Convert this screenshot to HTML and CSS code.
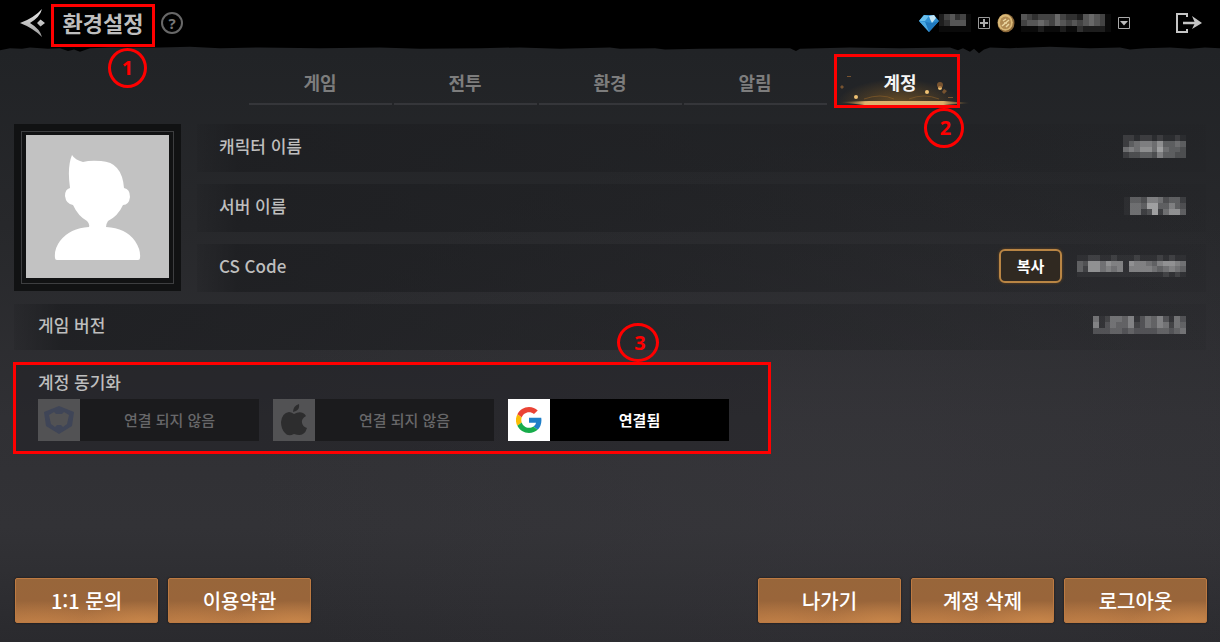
FILE: index.html
```html
<!DOCTYPE html>
<html lang="ko">
<head>
<meta charset="utf-8">
<title>환경설정</title>
<link rel="stylesheet" href="styles.css">
</head>
<body>
<div class="screen">
  <header class="topbar">
    <button class="icon-btn back" aria-label="뒤로">
      <svg width="26" height="30" viewBox="0 0 26 30"><defs><linearGradient id="steel" x1="0" y1="0" x2="0" y2="1"><stop offset="0" stop-color="#eee"/><stop offset="1" stop-color="#999"/></linearGradient></defs><path fill="url(#steel)" d="M22 1Q14 10 0 15Q13 20 22 29Q20 21 10 15Q20 9 22 1ZM20.500 11.500L25 15L20.500 18.500L17 15Z"/></svg>
    </button>
    <h1 class="title marked">환경설정<span class="num num-1">1</span></h1>
    <button class="icon-btn help" aria-label="도움말">?</button>
    <div class="wallet">
      <svg class="gem" width="20" height="18" viewBox="0 0 20 18"><path fill="#2f8fd2" d="M5 1H15L20 7L10 18L0 7Z"/><path fill="#69c0ed" d="M5 1L0 7H6L10 2Z"/><path fill="#c4e6f6" d="M10 2L15 1L17 4L13 9L11 5Z"/><path fill="#1f78be" d="M6 8L10 18L20 7L13 9Z"/><path fill="#4ba9e2" d="M0 7L10 18L6 8Z"/></svg>
      <span class="mosaic" data-w="32" data-h="18" data-pattern="245341,235551,111111"></span>
      <button class="icon-btn" aria-label="충전"><svg width="14" height="14" viewBox="0 0 14 14" fill="none" stroke="#999"><path d="M1.500 1.500H12.500V12.500H1.500Z"/><path stroke="#aaa" stroke-width="2" d="M7 3V11M3 7H11"/></svg></button>
      <svg class="coin" width="18" height="20" viewBox="0 0 18 20"><ellipse cx="9" cy="10" rx="8.500" ry="9.300" fill="#8b683a"/><ellipse cx="8.300" cy="9.500" rx="7.500" ry="8.300" fill="#d9b877"/><ellipse cx="8.500" cy="9.700" rx="5.500" ry="6.300" fill="#b08a52"/><path d="M5 13L12 7M6 8L9 6M9 14L12 11M7 10L10 10" fill="none" stroke="#ead6a0" stroke-width="1.500"/></svg>
      <span class="mosaic" data-w="90" data-h="18" data-pattern="5434446433256541,4556546545456541,1112111211322221"></span>
      <button class="icon-btn" aria-label="펼치기"><svg width="14" height="14" viewBox="0 0 14 14"><path d="M1.500 1.500H12.500V12.500H1.500Z" fill="none" stroke="#aaa"/><path d="M3 5H11L7 9.500Z" fill="#bbb"/></svg></button>
    </div>
    <button class="icon-btn exit" aria-label="나가기">
      <svg width="27" height="22" viewBox="0 0 27 22" fill="none" stroke="#c5c5c5" stroke-width="2"><path d="M12 5V2H2V20H12V17"/><path d="M8 11H21" stroke-width="2.500"/><path d="M17 4L27 11L17 17L20 11Z" fill="#c5c5c5" stroke="none"/></svg>
    </button>
    <svg class="torn" viewBox="0 0 1220 14" preserveAspectRatio="none"><path d="M0 0H1220V3L1205 2L1190 4L1170 2L1145 3L1130 5L1120 2L1090 3L1050 1L1010 3L990 2L984 5L979 10L974 4L970 8L963 3L958 6L950 2L900 3L850 2L800 4L796 7L790 3L700 4L665 5L655 3L620 4L610 2L560 4L520 2L480 3L420 4L380 2L320 3L260 2L220 3L190 1L160 2L110 2L90 3L80 8L74 5L68 7L60 3L48 4L30 2L22 4L10 3L0 6Z"/></svg>
  </header>

  <nav class="tabs">
    <button class="tab">게임</button>
    <button class="tab">전투</button>
    <button class="tab">환경</button>
    <button class="tab">알림</button>
    <button class="tab active" aria-current="page">
      <svg class="sparks" width="143" height="54" viewBox="0 0 143 54"><defs><radialGradient id="glow" cx=".5" cy="1" r=".5"><stop offset="0" stop-color="#9a6a24" stop-opacity=".6"/><stop offset="1" stop-color="#9a6a24" stop-opacity="0"/></radialGradient><linearGradient id="beam"><stop offset="0" stop-color="#80622f" stop-opacity="0"/><stop offset=".2" stop-color="#dfb16d"/><stop offset=".8" stop-color="#ddb06a"/><stop offset="1" stop-color="#80622f" stop-opacity=".3"/></linearGradient></defs><path fill="url(#glow)" d="M8 0H132V50H8Z"/><path fill="url(#beam)" d="M10 48L40 47H115L140 49L115 51H35Z"/><g fill="#efc173"><circle cx="27" cy="43" r="2"/><circle cx="98" cy="38" r="2"/><circle cx="111" cy="34" r="2"/></g><g fill="#9b6735" opacity=".7"><circle cx="111" cy="31" r="3"/><path d="M115 35l3 2-3 3-2-2ZM13 31l2 2-2 2-2-2ZM18 22h4v1h-4ZM119 43h5v1h-5Z"/></g><path d="M35 45Q52 39 65 45M80 45Q95 39 110 45" fill="none" stroke="#8d6028" opacity=".6"/></svg>
      <span class="tab-text">계정</span>
      <span class="num num-2">2</span>
    </button>
  </nav>

  <main class="content">
    <section class="profile">
      <div class="avatar-frame">
        <svg class="avatar" viewBox="0 0 143 143"><path fill="#c2c2c2" d="M0 0H143V143H0Z"/><path fill="#fff" d="M46 20Q49 25 57 27Q64 25 75 26Q96 27 98 53Q104 54 104 62Q103 70 97 70Q92 81 82 86Q80 89 80 92Q100 93 109 106Q115 115 114 123Q114 125 112 125H31Q29 125 29 123Q28 114 34 106Q44 93 63 92Q64 89 61 86Q52 81 47 70Q40 69 39 61Q39 54 44 53Q41 32 46 20Z"/></svg>
      </div>
      <dl class="rows">
        <div class="row"><dt>캐릭터 이름</dt><dd><span class="mosaic" data-w="63" data-h="23" data-pattern="22122121121,24566574454,56577585443,23344364433"></span></dd></div>
        <div class="row"><dt>서버 이름</dt><dd><span class="mosaic" data-w="62" data-h="18" data-pattern="14436653442,15548844643,15523825774"></span></dd></div>
        <div class="row"><dt>CS Code</dt><dd><button class="copy">복사</button><span class="mosaic" data-w="109" data-h="22" data-pattern="1122112111211121211,4377576617665467765,4277565616666545654,1111111111111112121"></span></dd></div>
      </dl>
    </section>
    <dl class="rows">
      <div class="row version"><dt>게임 버전</dt><dd><span class="mosaic" data-w="93" data-h="18" data-pattern="5125546135463153,6135446235465254,3334434333344345"></span></dd></div>
    </dl>
    <section class="sync marked">
      <h2 class="sync-title">계정 동기화</h2>
      <div class="accounts">
        <button class="account"><span class="logo"><svg width="32" height="32" viewBox="0 0 32 32"><path fill="#3f4557" fill-rule="evenodd" d="M16 2L31 8L29 22L16 30L3 22L1 8ZM11 8L6 11L8 20L12 23L14 21H18L20 23L24 20L26 11L21 8L19 10H13Z"/></svg></span><span class="state">연결 되지 않음</span></button>
        <button class="account"><span class="logo"><svg width="32" height="34" viewBox="0 0 32 34"><path fill="#2d2d2e" d="M21 1Q22 6 18 8L15 9Q15 3 21 1ZM16 11Q21 8 25 10Q27 11 28 13Q23 16 24 20Q25 24 29 25Q28 29 25 31Q22 33 16 31Q10 34 7 30Q3 26 3 19Q4 10 11 9Q13 9 16 11Z"/></svg></span><span class="state">연결 되지 않음</span></button>
        <button class="account linked"><span class="logo"><svg width="26" height="26" viewBox="0 0 48 48"><path fill="#ea4335" d="M24 9.500c3.540 0 6.710 1.220 9.210 3.600l6.850-6.850C35.900 2.380 30.470 0 24 0 14.620 0 6.510 5.380 2.560 13.220l7.980 6.190C12.430 13.720 17.740 9.500 24 9.500z"/><path fill="#1f7fc8" d="M46.980 24.550c0-1.570-.15-3.090-.38-4.550H24v9.020h12.940c-.58 2.960-2.260 5.480-4.780 7.180l7.730 6c4.510-4.180 7.090-10.360 7.090-17.650z"/><path fill="#fbbc05" d="M10.530 28.590A14.500 14.500 0 0 1 10.530 19.410l-7.980-6.190A24 24 0 0 0 2.560 34.780z"/><path fill="#17ac4b" d="M24 48c6.480 0 11.930-2.130 15.890-5.810l-7.730-6C30.010 37.640 27.240 38.490 24 38.490c-6.260 0-11.570-4.220-13.470-9.910l-7.980 6.190C6.510 42.620 14.620 48 24 48z"/></svg></span><span class="state">연결됨</span></button>
      </div>
      <span class="num num-3">3</span>
    </section>
  </main>

  <footer class="actions">
    <button class="action">1:1 문의</button>
    <button class="action">이용약관</button>
    <button class="action push">나가기</button>
    <button class="action">계정 삭제</button>
    <button class="action">로그아웃</button>
  </footer>
</div>
<script src="mosaic.js"></script>
</body>
</html>
```
FILE: styles.css
```css
*, *::before, *::after { box-sizing: border-box; }
body {
  margin: 0;
  background: #2c2c30;
  color: #bebebe;
  font-family: "Noto Sans CJK KR", sans-serif;
  font-weight: 500;
}
button {
  padding: 0;
  border: 0;
  background: none;
  color: inherit;
  font: inherit;
  cursor: pointer;
}
svg { display: block; }
h1, h2, dl, dd { margin: 0; }
.screen {
  min-height: 100vh;
  display: flex;
  flex-direction: column;
  background:
    radial-gradient(ellipse at 70% 75%, rgba(60, 59, 64, .4), transparent 50%),
    linear-gradient(#212326 8%, #27282b 35%, #303034 65%, #323236 82%, #2a2a2e);
}

/* top bar */
.topbar {
  position: relative;
  display: flex;
  align-items: center;
  height: 46px;
  padding: 0 18px 0 20px;
  background: #000;
}
.torn {
  position: absolute;
  top: 100%;
  left: 0;
  width: 100%;
  height: 10px;
}
.icon-btn { display: grid; place-items: center; }
.title {
  position: relative;
  z-index: 2;
  margin-left: 5px;
  width: 104px;
  height: 43px;
  margin-top: 4px;
  padding-bottom: 6px;
  display: flex;
  align-items: center;
  justify-content: center;
  font-size: 22px;
  line-height: 28px;
  font-weight: 700;
}
.marked { border: 3px solid #f00; }
.help {
  margin-left: 6px;
  width: 22px;
  height: 22px;
  border: 2px solid #686868;
  border-radius: 50%;
  color: #777;
  font: 700 15px/18px "Noto Sans", sans-serif;
}
.wallet {
  display: flex;
  align-items: center;
  gap: 6px;
  margin-left: auto;
}
.wallet .gem { margin-right: -6px; }
.exit { margin-left: 44px; }

/* numbered callouts */
.num {
  position: absolute;
  z-index: 3;
  display: grid;
  place-items: center;
  width: 40px;
  height: 40px;
  border: 3px solid #f00;
  border-radius: 50%;
  color: #f00;
  font: 700 20px/20px "Noto Sans", sans-serif;
}
.num-1 { top: 41px; left: 54px; width: 39px; }
.num-2 { top: 54px; left: 95px; padding-left: 4px; }
.num-3 { top: -42px; right: 109px; width: 42px; height: 39px; padding-left: 4px; }

/* tabs */
.tabs {
  display: flex;
  justify-content: center;
  gap: 2px;
  padding-top: 8px;
}
.tab {
  position: relative;
  width: 143px;
  height: 51px;
  border-bottom: 2px solid #35363a;
  padding-top: 7px;
  color: #7d7d7d;
  font-size: 18px;
  line-height: 26px;
  font-weight: 700;
}
.tab.active { border-color: transparent; color: #f4f4f4; }
.tab.active::after {
  content: "";
  position: absolute;
  top: 0;
  left: 5px;
  width: 126px;
  height: 54px;
  border: 3px solid #f00;
}
.sparks { position: absolute; top: 0; left: 0; }
.tab-text { position: relative; }

/* account details */
.content {
  display: flex;
  flex-direction: column;
  gap: 12px;
  padding: 19px 14px 0;
}
.profile { display: flex; gap: 16px; }
.avatar-frame {
  position: relative;
  flex: none;
  width: 167px;
  height: 167px;
  padding: 11px 12px;
  background: #111213;
}
.avatar-frame::before {
  content: "";
  position: absolute;
  inset: 7px;
  border: 1px solid #3d3e40;
}
.avatar { position: relative; width: 100%; }
.rows {
  flex: 1;
  display: flex;
  flex-direction: column;
  gap: 12px;
}
.row {
  display: flex;
  align-items: center;
  justify-content: space-between;
  height: 48px;
  padding: 0 20px 4px 22px;
  background: linear-gradient(90deg, rgba(29, 30, 33, .2), rgba(29, 30, 33, .8) 4%, rgba(31, 32, 35, .6) 50%, rgba(31, 32, 35, .15));
  font-size: 17px;
  line-height: 24px;
}
.row dd { display: flex; align-items: center; gap: 15px; }
.row.version { height: 46px; padding-left: 24px; }
.copy {
  width: 63px;
  height: 34px;
  border: 2px solid #b98544;
  border-radius: 6px;
  background: #302921;
  box-shadow: 0 0 3px #6b491f;
  color: #fff;
  font-size: 15px;
  line-height: 22px;
  font-weight: 700;
}

/* linked accounts */
.sync {
  position: relative;
  width: 758px;
  max-width: 100%;
  margin-left: -1px;
  padding: 5px 22px 10px;
  background: rgba(31, 32, 35, .45);
}
.sync-title {
  font-size: 17px;
  line-height: 24px;
  font-weight: 500;
  margin-bottom: 5px;
}
.accounts { display: flex; gap: 14px; }
.account {
  display: flex;
  width: 221px;
  height: 42px;
  background: #1b1b1d;
  color: #68686a;
  font-size: 15px;
  line-height: 22px;
}
.logo {
  display: grid;
  place-items: center;
  width: 42px;
  height: 42px;
  background: #525254;
}
.state { flex: 1; align-self: center; }
.linked { background: #000; color: #fff; font-weight: 700; }
.linked .logo { background: #fff; }

/* bottom actions */
.actions {
  display: flex;
  gap: 10px;
  margin-top: auto;
  padding: 12px 13px 19px 15px;
}
.action {
  width: 143px;
  height: 45px;
  border: 1px solid #bd7a42;
  border-radius: 2px;
  background:
    radial-gradient(ellipse at 90% 100%, rgba(215, 145, 78, .5), transparent 35%),
    radial-gradient(ellipse at 15% 100%, rgba(205, 135, 72, .3), transparent 35%),
    linear-gradient(#98663a, #99653a 50%, #b87a45);
  box-shadow: 0 0 2px #15120f;
  color: #fff;
  font-size: 20px;
  line-height: 28px;
}
.push { margin-left: auto; }
```
FILE: mosaic.js
```js
// Draws the masked values as a grid of grey blocks; each digit is a brightness level.
document.querySelectorAll(".mosaic").forEach((el) => {
  const rows = el.dataset.pattern.split(",");
  const cols = rows[0].length;
  let cells = "";
  rows.forEach((row, y) => {
    [...row].forEach((level, x) => {
      cells += `<rect x="${x}" y="${y}" width="1" height="1" fill="#fff" fill-opacity="${(level - 0.5) * 0.075}"/>`;
    });
  });
  el.innerHTML = `<svg width="${el.dataset.w}" height="${el.dataset.h}" viewBox="0 0 ${cols} ${rows.length}" preserveAspectRatio="none" shape-rendering="crispEdges">${cells}</svg>`;
});
```
